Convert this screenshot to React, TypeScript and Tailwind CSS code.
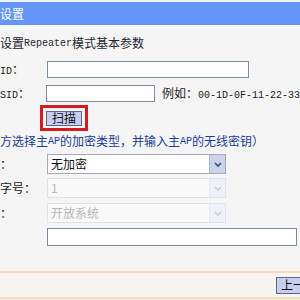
import React from 'react'

const mono = "font-['Liberation_Mono',monospace] text-[10px]"

function Arrow({ disabled }: { disabled?: boolean }) {
  return (
    <div
      className={`w-[16px] h-full flex items-center justify-center border-l ${
        disabled ? 'bg-[#eef2f8] border-[#e4e8f0]' : 'bg-[#c9d3ea] border-[#a9b5d3]'
      }`}
    >
      <svg width="8" height="5" viewBox="0 0 8 5">
        <path d="M1 1 L4 4 L7 1" fill="none" stroke={disabled ? '#c5ccd8' : '#3b4a72'} strokeWidth="1.6" />
      </svg>
    </div>
  )
}

function Select({ text, disabled }: { text: string; disabled?: boolean }) {
  return (
    <div
      className={`w-[179px] h-[20px] flex items-center border ${
        disabled ? 'border-[#dfe2e8] bg-[#f9f9f9] text-[#b5b5b5]' : 'border-[#a6aab4] bg-white text-[#111]'
      }`}
    >
      <span className="flex-1 pl-[3px] leading-none">{text}</span>
      <Arrow disabled={disabled} />
    </div>
  )
}

function App() {
  return (
    <div className="w-[300px] h-[300px] overflow-hidden bg-[#f5f5f5] font-['Noto_Sans_CJK_SC',sans-serif] text-[12px] text-[#1e2433]">
      <div className="h-[2px] bg-[#eef3fb]" />
      <div className="h-[23px] bg-[#6396f8] text-white flex items-center">设置</div>
      <div className="h-[4px] bg-[#f9fbff]" />

      <div className="h-[28px] flex items-center whitespace-nowrap">
        设置<span className={mono}>Repeater</span>模式基本参数
      </div>

      <div className="h-[24px] flex items-center">
        <span className="w-[47px] text-[#222]"><span className={mono}>ID</span>：</span>
        <div className="w-[202px] h-[17px] border border-[#7f8aa3] bg-white" />
      </div>

      <div className="h-[24px] flex items-center whitespace-nowrap">
        <span className="w-[47px] text-[#222]"><span className={mono}>SID</span>：</span>
        <div className="w-[111px] h-[17px] border border-[#7f8aa3] bg-white" />
        <span className="ml-[7px] text-[#222]">
          例如：<span className={mono}>00-1D-0F-11-22-33</span>
        </span>
      </div>

      <div className="h-[25px] flex items-start">
        <div className="ml-[40px] w-[48px] h-[26px] border-[3px] border-[#d61a1f] flex items-center justify-center">
          <div className="w-[36px] h-[15px] bg-[#c7cef0] border border-[#5d6690] flex items-center justify-center text-[#111] leading-none">
            扫描
          </div>
        </div>
      </div>

      <div className="h-[22px] flex items-center whitespace-nowrap text-[#1c3c98]">
        方选择主<span className={mono}>AP</span>的加密类型，并输入主<span className={mono}>AP</span>的无线密钥）
      </div>

      <div className="h-[24px] flex items-center">
        <span className="w-[47px] text-[#222]">：</span>
        <Select text="无加密" />
      </div>

      <div className="h-[24px] flex items-center">
        <span className="w-[47px] text-[#222]">字号：</span>
        <Select text="1" disabled />
      </div>

      <div className="h-[26px] flex items-center">
        <span className="w-[47px] text-[#222]">：</span>
        <Select text="开放系统" disabled />
      </div>

      <div className="h-[22px] flex items-center">
        <span className="w-[47px]" />
        <div className="w-[250px] h-[18px] border border-[#7c86a8] bg-white" />
      </div>

      <div className="h-[23px]" />
      <div className="h-[2px] bg-[#f3dcb8]" />
      <div className="h-[24px] bg-[#f6f4f1] flex items-center justify-end">
        <div className="w-[24px] h-[17px] bg-[#c7cef0] border-l border-y border-[#5d6690] flex items-center pl-[4px] text-[#111] leading-none whitespace-nowrap overflow-hidden">
          上一步
        </div>
      </div>
      <div className="h-[2px] bg-[#f3dcb8]" />
    </div>
  )
}

export default App
